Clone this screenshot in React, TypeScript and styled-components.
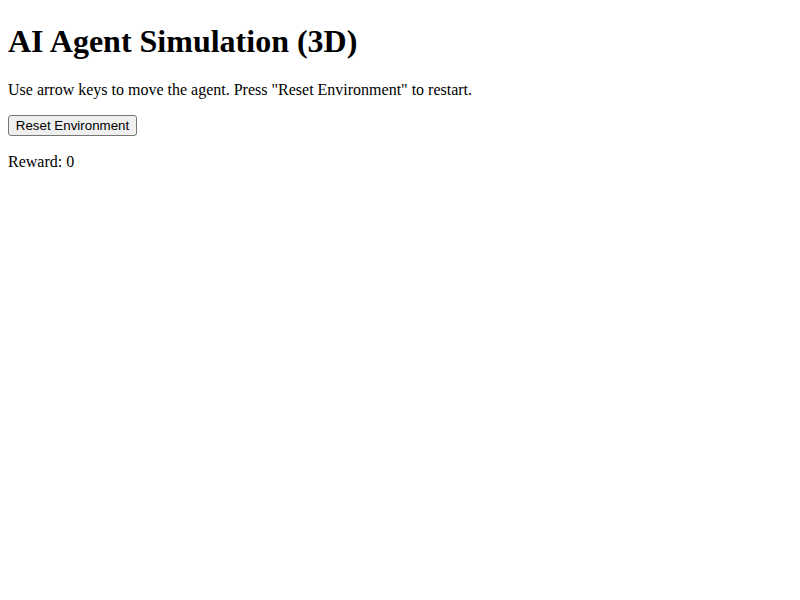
import React from "react";
import styled, { createGlobalStyle } from "styled-components";

const Global = createGlobalStyle`
  body {
    margin: 8px;
    font-family: "Liberation Serif", "Times New Roman", serif;
    font-size: 16px;
    color: #000;
    background: #fff;
  }
`;

const Title = styled.h1`
  font-size: 2em;
  font-weight: bold;
  margin: 15px 0 0.67em;
`;

const Text = styled.p`
  margin: 1em 0;
`;

const Controls = styled.div`
  margin: 16px 0 17px;
  display: flex;
`;

const ResetButton = styled.button`
  font-family: "Liberation Sans", Arial, sans-serif;
  font-size: 13.333px;
  padding: 1px 6px;
  height: 21px;
  width: 129px;
  background: #efefef;
  color: #000;
  border: 1px solid #767676;
  border-radius: 3px;
  cursor: pointer;
`;

export default function App() {
  const [reward, setReward] = React.useState(0);
  return (
    <>
      <Global />
      <Title>AI Agent Simulation (3D)</Title>
      <Text>Use arrow keys to move the agent. Press "Reset Environment" to restart.</Text>
      <Controls>
        <ResetButton onClick={() => setReward(0)}>Reset Environment</ResetButton>
      </Controls>
      <Text>Reward: {reward}</Text>
    </>
  );
}
